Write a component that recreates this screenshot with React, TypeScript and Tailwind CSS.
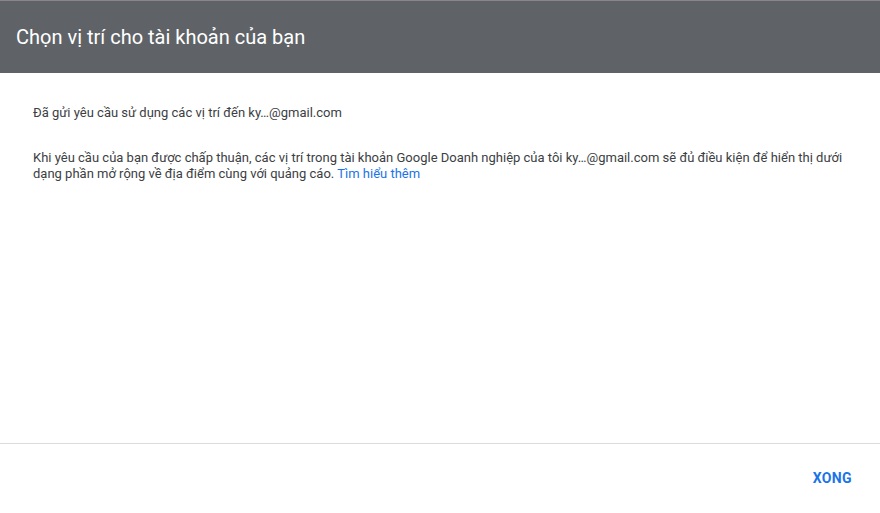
export default function App() {
  return (
    <div className="flex h-[513px] w-[880px] flex-col bg-white font-['Roboto','Liberation_Sans',sans-serif]">
      <div className="flex h-[73px] shrink-0 items-center border-t border-[#8b8589] bg-[#5f6368] px-4">
        <h1 className="text-[20px] text-white">Chọn vị trí cho tài khoản của bạn</h1>
      </div>

      <div className="flex-1 px-[33px] pt-[32px] text-[13px] leading-[16px] text-[#3c4043]">
        <p>Đã gửi yêu cầu sử dụng các vị trí đến ky…@gmail.com</p>
        <p className="mt-[29px]">
          Khi yêu cầu của bạn được chấp thuận, các vị trí trong tài khoản Google Doanh nghiệp của tôi ky…@gmail.com sẽ đủ điều kiện để hiển thị dưới
          dạng phần mở rộng về địa điểm cùng với quảng cáo.{' '}
          <a href="#" className="text-[#1a73e8]">
            Tìm hiểu thêm
          </a>
        </p>
      </div>

      <div className="flex h-[70px] shrink-0 items-center justify-end border-t border-[#dadce0] pr-[28px]">
        <button className="text-[14px] font-bold tracking-wide text-[#1a73e8]">XONG</button>
      </div>
    </div>
  )
}
